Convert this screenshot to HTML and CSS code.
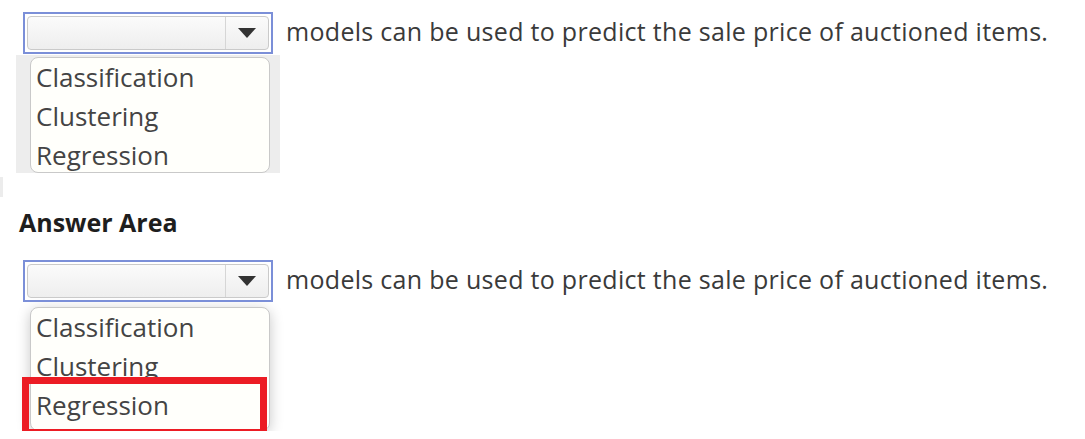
FILE: index.html
```html
<!DOCTYPE html>
<html lang="en">
  <head>
    <meta charset="UTF-8" />
    <meta name="viewport" content="width=device-width, initial-scale=1.0" />
    <title>Answer Area</title>
    <link rel="stylesheet" href="styles.css">
  </head>
  <body>
    <div class="page">
      <div class="question">
        <div class="select">
          <div class="select-field">
            <span class="select-value"></span>
            <span class="select-button"><span class="arrow"></span></span>
          </div>
        </div>
        <span class="sentence">models can be used to predict the sale price of auctioned items.</span>
      </div>
      <div class="options-panel">
        <ul class="options">
          <li>Classification</li>
          <li>Clustering</li>
          <li>Regression</li>
        </ul>
      </div>
      <div class="edge-mark"></div>

      <h3 class="answer-title">Answer Area</h3>
      <div class="question">
        <div class="select">
          <div class="select-field">
            <span class="select-value"></span>
            <span class="select-button"><span class="arrow"></span></span>
          </div>
        </div>
        <span class="sentence">models can be used to predict the sale price of auctioned items.</span>
      </div>
      <ul class="options options-floating">
        <li>Classification</li>
        <li>Clustering</li>
        <li class="selected">Regression</li>
      </ul>
    </div>
  </body>
</html>
```

FILE: styles.css
```css
body {
  font-family: "Open Sans", "Noto Sans", sans-serif;
  margin: 0;
  padding: 0;
  background-color: #fff;
  color: #3a3a3a;
}
.page {
  padding-top: 12px;
}
.question {
  display: flex;
  align-items: center;
  padding-left: 23px;
}
.select {
  width: 250px;
  height: 42px;
  padding: 2px;
  border: 2px solid #7b8fd8;
  box-sizing: border-box;
}
.select-field {
  display: flex;
  height: 100%;
  border: 1px solid #cacaca;
  border-radius: 4px;
  background: linear-gradient(#fbfbfb, #eeeeee);
  box-sizing: border-box;
}
.select-value {
  flex: 1;
}
.select-button {
  width: 42px;
  display: flex;
  align-items: center;
  justify-content: center;
  border-left: 1px solid #d6d6d6;
}
.arrow {
  width: 0;
  height: 0;
  border-left: 9px solid transparent;
  border-right: 9px solid transparent;
  border-top: 10px solid #333;
}
.sentence {
  margin-left: 13px;
  margin-top: -4px;
  font-size: 25px;
  line-height: 34px;
  letter-spacing: 0.3px;
  color: #3a3a3a;
  white-space: nowrap;
}
.options-panel {
  width: 264px;
  margin: 1px 0 0 16px;
  padding: 2px 10px 0 14px;
  background-color: #ededed;
  box-sizing: border-box;
}
.options {
  list-style: none;
  width: 240px;
  margin: 0;
  padding: 0 0 0 5px;
  height: 116px;
  border: 1px solid #c9c9c9;
  border-radius: 8px;
  background-color: #fffffb;
  box-sizing: border-box;
  font-size: 26px;
  line-height: 39px;
  color: #444;
}
.options li {
  white-space: nowrap;
}
.edge-mark {
  width: 3px;
  height: 20px;
  margin-top: 4px;
  background-color: #ececec;
}
.answer-title {
  margin: 10px 0 0 19px;
  font-size: 25px;
  line-height: 30px;
  font-weight: bold;
  color: #1e1e1e;
}
.answer-title + .question {
  margin-top: 23px;
}
.options-floating {
  margin: 5px 0 0 30px;
  height: 124px;
  box-shadow: 0 3px 14px rgba(0, 0, 0, 0.22);
}
.selected {
  position: relative;
}
.selected::after {
  content: "";
  position: absolute;
  left: -14px;
  top: -9px;
  right: 2px;
  bottom: -11px;
  border: 7px solid #ec1c24;
}
```
